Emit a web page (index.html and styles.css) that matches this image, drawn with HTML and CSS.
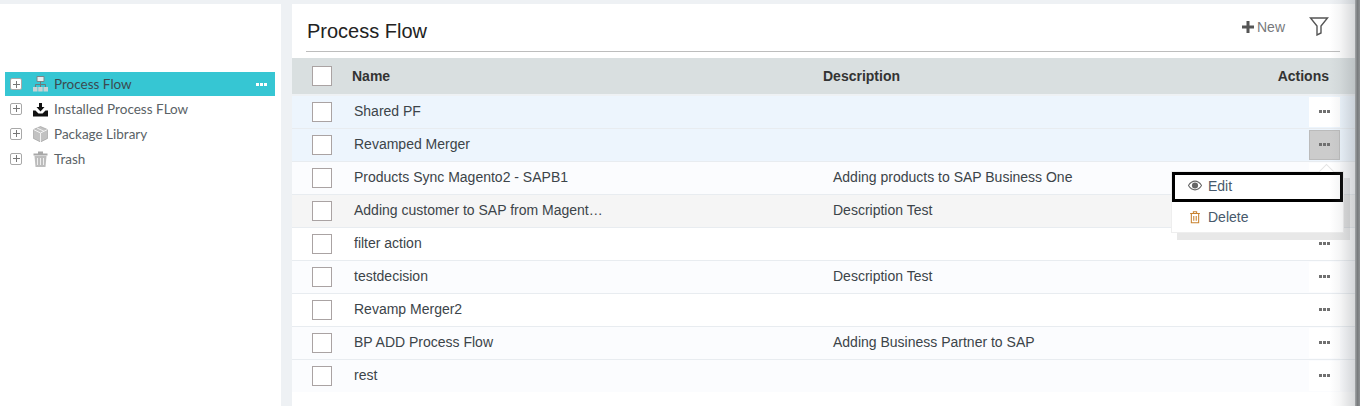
FILE: index.html
```html
<!DOCTYPE html>
<html>
	<head>
		<title>Process Flow</title>
		<link rel="stylesheet" href="styles.css">
	</head>
	<body>
		<div class="page">
			<div class="sidebar">
				<div class="tree-row tree-active">
					<span class="plus-box"></span>
					<svg class="tree-icon" viewBox="0 0 15 16"><path d="M4 0.500h7v5H4z" fill="#e8eef0" stroke="#7b8688"/><path d="M7.500 5.500v3M2.500 11V8.500h10V11M7.500 8.500V11" stroke="#6d7a7c" fill="none"/><path d="M0 11h4.500v4.500H0zM5.200 11h4.500v4.500H5.200zM10.500 11H15v4.500h-4.500z" fill="#c9d3d5"/></svg>
					<span class="tree-label">Process Flow</span>
					<span class="dots dots-white"><i></i><i></i><i></i></span>
				</div>
				<div class="tree-row">
					<span class="plus-box"></span>
					<svg class="tree-icon" viewBox="0 0 15 16"><path d="M6 2h3v4h2.500l-4 4.500-4-4.500H6z" fill="#111"/><path d="M0 9.500h2.500l3 3h4l3-3H15V15.500H0z" fill="#111"/></svg>
					<span class="tree-label">Installed Process FLow</span>
				</div>
				<div class="tree-row">
					<span class="plus-box"></span>
					<svg class="tree-icon" viewBox="0 0 15 16"><path d="M7.500 0.500l7 3v9l-7 3.500-7-3.500v-9z" fill="#c2c2c2" stroke="#999" stroke-width="0.600"/><path d="M0.500 3.500l7 3.500 7-3.500M7.500 7v9M4 2l7 3.300" stroke="#f2f2f2" fill="none"/></svg>
					<span class="tree-label">Package Library</span>
				</div>
				<div class="tree-row">
					<span class="plus-box"></span>
					<svg class="tree-icon" viewBox="0 0 15 16"><path d="M0.500 2.500h14v2h-14zM5 0.500h5v2H5z" fill="#a8a8a8"/><path d="M1.500 5h12l-1 11h-10z" fill="#bdbdbd"/><path d="M4.500 7v7M7.500 7v7M10.500 7v7" stroke="#eee"/></svg>
					<span class="tree-label">Trash</span>
				</div>
			</div>
			<div class="main">
				<div class="title-bar">
					<h1>Process Flow</h1>
					<span class="new-btn"><svg class="new-icon" viewBox="0 0 12 12"><path d="M4.500 0h3v4.500H12v3H7.500V12h-3V7.500H0v-3h4.500z" fill="#555"/></svg>New</span>
					<svg class="filter-icon" viewBox="0 0 20 20"><path d="M1.500 2h17l-6.500 8v7l-4 2v-9z" fill="none" stroke="#555" stroke-width="1.400"/></svg>
				</div>
				<div class="table-row table-head">
					<span class="check"></span>
					<span class="col-name">Name</span>
					<span class="col-desc">Description</span>
					<span class="col-act">Actions</span>
				</div>
				<div class="table-row row-blue">
					<span class="check"></span>
					<span class="col-name">Shared PF</span>
					<span class="col-desc"></span>
					<span class="dots-btn"><span class="dots"><i></i><i></i><i></i></span></span>
				</div>
				<div class="table-row row-blue">
					<span class="check"></span>
					<span class="col-name">Revamped Merger</span>
					<span class="col-desc"></span>
					<span class="dots-btn dots-open"><span class="dots"><i></i><i></i><i></i></span></span>
				</div>
				<div class="table-row row-light">
					<span class="check"></span>
					<span class="col-name">Products Sync Magento2 - SAPB1</span>
					<span class="col-desc">Adding products to SAP Business One</span>
					<span class="dots-btn"></span>
				</div>
				<div class="table-row row-grey">
					<span class="check"></span>
					<span class="col-name">Adding customer to SAP from Magent…</span>
					<span class="col-desc">Description Test</span>
					<span class="dots-btn"></span>
				</div>
				<div class="table-row">
					<span class="check"></span>
					<span class="col-name">filter action</span>
					<span class="col-desc"></span>
					<span class="dots-btn"><span class="dots"><i></i><i></i><i></i></span></span>
				</div>
				<div class="table-row row-light">
					<span class="check"></span>
					<span class="col-name">testdecision</span>
					<span class="col-desc">Description Test</span>
					<span class="dots-btn"><span class="dots"><i></i><i></i><i></i></span></span>
				</div>
				<div class="table-row">
					<span class="check"></span>
					<span class="col-name">Revamp Merger2</span>
					<span class="col-desc"></span>
					<span class="dots-btn"><span class="dots"><i></i><i></i><i></i></span></span>
				</div>
				<div class="table-row row-light">
					<span class="check"></span>
					<span class="col-name">BP ADD Process Flow</span>
					<span class="col-desc">Adding Business Partner to SAP</span>
					<span class="dots-btn"><span class="dots"><i></i><i></i><i></i></span></span>
				</div>
				<div class="table-row row-light row-last">
					<span class="check"></span>
					<span class="col-name">rest</span>
					<span class="col-desc"></span>
					<span class="dots-btn"><span class="dots"><i></i><i></i><i></i></span></span>
				</div>
				<div class="menu">
					<span class="menu-arrow"></span>
					<div class="menu-item menu-focus">
						<svg class="menu-icon" viewBox="0 0 16 12"><path d="M0.500 6C3 2 5.500 1 8 1s5 1 7.500 5C13 10 10.500 11 8 11S3 10 0.500 6z" fill="none" stroke="#666" stroke-width="1.200"/><circle cx="8" cy="6" r="3.500" fill="#666"/></svg>
						Edit
					</div>
					<div class="menu-item">
						<svg class="menu-icon" viewBox="0 0 16 16"><path d="M2 3h12M6 3V1h4v2" fill="none" stroke="#c9822e" stroke-width="1.300"/><path d="M3.500 3.500v11h9v-11M6.500 6v6M9.500 6v6" fill="none" stroke="#c9822e" stroke-width="1.300"/></svg>
						Delete
					</div>
				</div>
				<div class="main-shade"></div>
			</div>
			<div class="edge"></div>
		</div>
	</body>
</html>
```
FILE: styles.css
```css
html, body {
	margin: 0;
	height: 100%;
	overflow: hidden;
}
body {
	background: #eef1f4;
	font-family: "Liberation Sans", Arial, sans-serif;
	font-size: 14px;
	color: #3c4449;
}
.page {
	display: flex;
	height: 406px;
	padding-top: 4px;
	box-sizing: border-box;
}
.sidebar {
	width: 281px;
	flex: none;
	background: #fff;
	padding: 68px 6px 0 5px;
	box-sizing: border-box;
	font-family: Lato, sans-serif;
}
.tree-row {
	display: flex;
	align-items: center;
	height: 25px;
	padding-left: 5px;
	color: #5a6266;
}
.tree-active {
	background: #36c6d3;
	height: 24px;
	color: #3c4a50;
}
.plus-box {
	width: 10px;
	height: 10px;
	border: 1px solid #a8a8a8;
	border-radius: 2px;
	flex: none;
	background: linear-gradient(#777, #777) center / 7px 1px no-repeat, linear-gradient(#777, #777) center / 1px 7px no-repeat, #fff;
}
.tree-icon {
	width: 15px;
	height: 16px;
	margin-left: 11px;
	flex: none;
}
.tree-label {
	margin-left: 6px;
	font-size: 13.5px;
	flex: 1;
}
.dots {
	display: flex;
	gap: 1px;
}
.dots i {
	width: 3px;
	height: 3px;
	background: #707070;
}
.dots-white {
	margin-right: 8px;
}
.dots-white i {
	background: #fff;
}
.main {
	position: relative;
	width: 1063px;
	margin-left: 11px;
	background: #fff;
	flex: none;
}
.main-shade {
	position: absolute;
	top: -4px;
	bottom: 0;
	right: 0;
	width: 25px;
	background: linear-gradient(90deg, rgba(130,135,140,0), rgba(130,135,140,0.08) 40%, rgba(130,135,140,0.32));
}
.title-bar {
	display: flex;
	align-items: center;
	height: 47px;
	margin: 0 15px 6px 14px;
	border-bottom: 1px solid #bdbdbd;
}
h1 {
	margin: 0;
	font-size: 20px;
	font-weight: normal;
	color: #222;
	flex: 1;
	padding: 8px 0 0 1px;
}
.new-btn {
	display: flex;
	align-items: center;
	color: #77797c;
	margin-right: 24px;
	margin-top: -1px;
}
.new-icon {
	width: 12px;
	height: 12px;
	margin-right: 3px;
}
.filter-icon {
	width: 20px;
	height: 20px;
	margin-right: 11px;
	margin-top: -4px;
}
.table-row {
	display: flex;
	align-items: center;
	height: 33px;
	box-sizing: border-box;
	border-bottom: 1px solid #e8ecf0;
	padding: 0 15px 0 20px;
	background: #fff;
}
.table-head {
	height: 38px;
	background: #d9dfe0;
	border-bottom: 2px solid #eef1f4;
	font-weight: bold;
	color: #333;
}
.row-blue {
	background: #edf5fd;
}
.row-light {
	background: #fbfcfe;
}
.row-grey {
	background: #f5f5f5;
}
.row-last {
	height: 32px;
	border-bottom: 0;
}
.check {
	width: 18px;
	height: 18px;
	border: 1px solid #aaa3a3;
	background: #fff;
	flex: none;
}
.col-name {
	width: 479px;
	margin-left: 22px;
	padding-bottom: 2px;
	flex: none;
}
.table-head .col-name {
	margin-left: 20px;
	padding-bottom: 0;
}
.col-desc {
	flex: 1;
	padding-bottom: 2px;
}
.table-head .col-desc {
	margin-left: -8px;
	padding-bottom: 0;
}
.col-act {
	margin-right: 11px;
}
.dots-btn {
	width: 31px;
	height: 30px;
	padding-bottom: 2px;
	flex: none;
	background: #fff;
	display: flex;
	align-items: center;
	justify-content: center;
	box-sizing: border-box;
}
.dots-open {
	background: #ccc;
	border: 1px solid #bbb;
}
.menu {
	position: absolute;
	left: 879px;
	top: 167px;
	width: 173px;
	height: 62px;
	box-sizing: border-box;
	background: #fff;
	border: 1px solid #eee;
	box-shadow: 6px 7px 0 rgba(0,0,0,0.09);
	color: #47596b;
}
.menu-arrow {
	position: absolute;
	left: 149px;
	top: -6px;
	width: 10px;
	height: 10px;
	background: #fff;
	border-top: 1px solid #e4e4e4;
	border-left: 1px solid #e4e4e4;
	transform: rotate(45deg);
}
.menu-item {
	position: relative;
	display: flex;
	align-items: center;
	height: 30px;
	box-sizing: border-box;
	padding-left: 16px;
}
.menu-focus {
	border: 3px solid #000;
	background: #fff;
	padding: 0 0 3px 13px;
}
.menu-icon {
	width: 14px;
	height: 13px;
	margin-right: 6px;
}
.edge {
	flex: 1;
	margin-top: -4px;
	background: linear-gradient(90deg, #a3a6a8, #787b7d 50%, #8e9193);
}
```
